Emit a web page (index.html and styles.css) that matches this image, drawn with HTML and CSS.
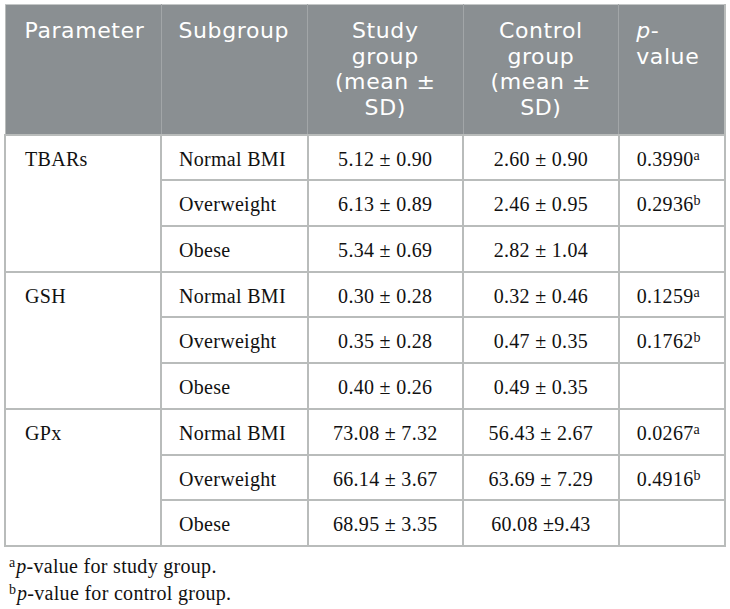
FILE: index.html
```html
<!DOCTYPE html>
<html lang="en">
<head>
<meta charset="utf-8">
<title>Oxidative stress parameters by BMI subgroup</title>
<link rel="stylesheet" href="styles.css">
</head>
<body>
<div class="page">
  <table class="data">
    <colgroup>
      <col class="c-param">
      <col class="c-sub">
      <col class="c-study">
      <col class="c-control">
      <col class="c-p">
    </colgroup>
    <thead>
      <tr>
        <th class="h-param">Parameter</th>
        <th class="h-sub">Subgroup</th>
        <th class="h-num">Study<br>group<br>(mean ±<br>SD)</th>
        <th class="h-num">Control<br>group<br>(mean ±<br>SD)</th>
        <th class="h-p"><i>p</i>-<br>value</th>
      </tr>
    </thead>
    <tbody>
      <tr>
        <td class="param" rowspan="3">TBARs</td>
        <td class="sub">Normal BMI</td>
        <td class="num">5.12 ± 0.90</td>
        <td class="num">2.60 ± 0.90</td>
        <td class="pv">0.3990<sup>a</sup></td>
      </tr>
      <tr>
        <td class="sub">Overweight</td>
        <td class="num">6.13 ± 0.89</td>
        <td class="num">2.46 ± 0.95</td>
        <td class="pv">0.2936<sup>b</sup></td>
      </tr>
      <tr>
        <td class="sub">Obese</td>
        <td class="num">5.34 ± 0.69</td>
        <td class="num">2.82 ± 1.04</td>
        <td class="pv"></td>
      </tr>
      <tr>
        <td class="param" rowspan="3">GSH</td>
        <td class="sub">Normal BMI</td>
        <td class="num">0.30 ± 0.28</td>
        <td class="num">0.32 ± 0.46</td>
        <td class="pv">0.1259<sup>a</sup></td>
      </tr>
      <tr>
        <td class="sub">Overweight</td>
        <td class="num">0.35 ± 0.28</td>
        <td class="num">0.47 ± 0.35</td>
        <td class="pv">0.1762<sup>b</sup></td>
      </tr>
      <tr>
        <td class="sub">Obese</td>
        <td class="num">0.40 ± 0.26</td>
        <td class="num">0.49 ± 0.35</td>
        <td class="pv"></td>
      </tr>
      <tr>
        <td class="param" rowspan="3">GPx</td>
        <td class="sub">Normal BMI</td>
        <td class="num">73.08 ± 7.32</td>
        <td class="num">56.43 ± 2.67</td>
        <td class="pv">0.0267<sup>a</sup></td>
      </tr>
      <tr>
        <td class="sub">Overweight</td>
        <td class="num">66.14 ± 3.67</td>
        <td class="num">63.69 ± 7.29</td>
        <td class="pv">0.4916<sup>b</sup></td>
      </tr>
      <tr>
        <td class="sub">Obese</td>
        <td class="num">68.95 ± 3.35</td>
        <td class="num">60.08 ±9.43</td>
        <td class="pv"></td>
      </tr>
    </tbody>
  </table>
  <div class="notes">
    <p class="note"><sup>a</sup><i>p</i>-value for study group.</p>
    <p class="note"><sup>b</sup><i>p</i>-value for control group.</p>
  </div>
</div>
</body>
</html>
```

FILE: styles.css
```css
html, body {
  margin: 0;
  padding: 0;
  background: #ffffff;
}

.page {
  padding: 4px 0 0 4px;
}

.data {
  border-collapse: collapse;
  table-layout: fixed;
  width: 720px;
}

.c-param { width: 156px; }
.c-sub { width: 146.5px; }
.c-study { width: 155.5px; }
.c-control { width: 155.7px; }
.c-p { width: 106.3px; }

.data th {
  background: #8a8f92;
  color: #ffffff;
  font-family: "DejaVu Sans", "Open Sans", sans-serif;
  font-weight: normal;
  font-size: 22px;
  line-height: 25.7px;
  vertical-align: top;
  padding: 13px 6px 12.9px 6px;
  border-top: 1px solid #c4c7c7;
  border-left: 1px solid #a2a6a8;
  border-right: 1px solid #a2a6a8;
  letter-spacing: 0.6px;
}

.data th.h-param {
  text-align: left;
  padding-left: 19px;
  border-left: 1px solid #b9bcbb;
}

.data th.h-sub {
  text-align: left;
  padding-left: 17px;
}

.data th.h-num {
  text-align: center;
}

.data th.h-p {
  text-align: left;
  padding-left: 17px;
  border-right: 2px solid #b9bcbb;
}

.data td {
  font-family: "Liberation Serif", "Times New Roman", serif;
  font-size: 20px;
  line-height: 22px;
  letter-spacing: 0.3px;
  color: #111111;
  border: 2px solid #b9bcbb;
  padding: 12px 6px 9.7px 6px;
  vertical-align: top;
}

.data td.param {
  text-align: left;
  padding-left: 19px;
}

.data td.sub {
  text-align: left;
  padding-left: 17px;
}

.data td.num {
  text-align: center;
}

.data td.pv {
  text-align: left;
  padding-left: 17px;
}

.data sup,
.note sup {
  font-size: 14px;
  line-height: 0;
  vertical-align: 6px;
  letter-spacing: 0;
}

.notes {
  padding-top: 6px;
}

.note {
  margin: 0;
  padding-left: 5px;
  font-family: "Liberation Serif", "Times New Roman", serif;
  font-size: 20px;
  line-height: 27.5px;
  letter-spacing: 0.3px;
  color: #111111;
}

.note sup {
  margin-right: 1px;
}
```
